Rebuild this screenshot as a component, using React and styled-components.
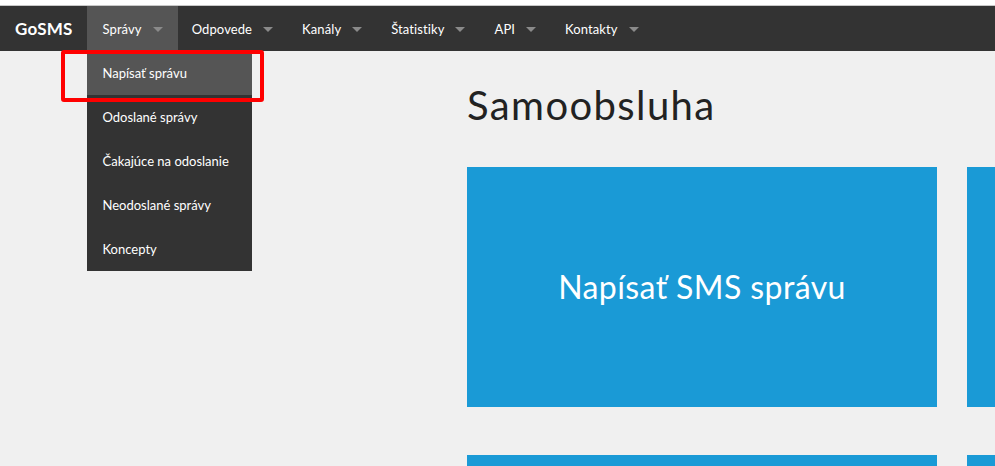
import styled, { createGlobalStyle } from "styled-components";

const GlobalStyle = createGlobalStyle`
  html, body {
    margin: 0;
    padding: 0;
    background: #f0f0f0;
    font-family: Lato, "Noto Sans", sans-serif;
    overflow: hidden;
  }
`;

const TopStrip = styled.div`
  height: 5px;
  background: #fff;
  border-bottom: 1px solid #c8c8c8;
`;

const NavBar = styled.nav`
  display: flex;
  align-items: stretch;
  height: 45px;
  background: #333;
  color: #fff;
  position: relative;
`;

const Brand = styled.div`
  display: flex;
  align-items: center;
  padding: 0 15px;
  font-size: 17px;
  font-weight: 700;
  letter-spacing: 0.2px;
`;

const NavItem = styled.div`
  position: relative;
  display: flex;
  align-items: center;
  gap: 11px;
  padding: 0 15px 0 ${(p) => p.$left || 14}px;
  font-size: 13px;
  letter-spacing: 0.1px;
  background: ${(p) => (p.$active ? "#555" : "transparent")};
`;

const Caret = styled.span`
  width: 0;
  height: 0;
  border-left: 5px solid transparent;
  border-right: 5px solid transparent;
  border-top: 5px solid #8a8a8a;
  margin-top: 1px;
`;

const Dropdown = styled.ul`
  position: absolute;
  top: 45px;
  left: 0;
  width: 165px;
  margin: 0;
  padding: 0;
  list-style: none;
  background: #333;
  letter-spacing: 0;
  z-index: 5;
`;

const DropItem = styled.li`
  height: 44px;
  display: flex;
  align-items: center;
  padding-left: 15px;
  font-size: 13px;
  color: #fff;
  background: ${(p) => (p.$active ? "#555" : "transparent")};
`;

const Highlight = styled.div`
  position: absolute;
  top: -1px;
  left: -26px;
  width: 195px;
  height: 44px;
  border: 4px solid #ff0000;
  border-radius: 3px;
  pointer-events: none;
`;

const Main = styled.main`
  padding: 31px 0 0 467px;
`;

const Title = styled.h1`
  margin: 0 0 39px;
  font-size: 40px;
  font-weight: 400;
  color: #222;
  line-height: 46px;
  letter-spacing: 1.4px;
`;

const Grid = styled.div`
  display: grid;
  grid-template-columns: 470px 470px;
  column-gap: 30px;
  row-gap: 48px;
`;

const Tile = styled.div`
  height: 240px;
  background: #1a9ad6;
  color: #fff;
  display: flex;
  align-items: center;
  justify-content: center;
  font-size: 32px;
  letter-spacing: 0.4px;
  padding-bottom: 2px;
  box-sizing: border-box;
`;

const menu = ["Odpovede", "Kanály", "Štatistiky", "API", "Kontakty"];
const sub = [
  "Napísať správu",
  "Odoslané správy",
  "Čakajúce na odoslanie",
  "Neodoslané správy",
  "Koncepty",
];

export default function App() {
  return (
    <>
      <GlobalStyle />
      <TopStrip />
      <NavBar>
        <Brand>GoSMS</Brand>
        <NavItem $active $left={15}>
          Správy
          <Caret />
          <Dropdown>
            {sub.map((s, i) => (
              <DropItem key={s} $active={i === 0}>
                {s}
              </DropItem>
            ))}
            <Highlight />
          </Dropdown>
        </NavItem>
        {menu.map((m) => (
          <NavItem key={m}>
            {m}
            <Caret />
          </NavItem>
        ))}
      </NavBar>
      <Main>
        <Title>Samoobsluha</Title>
        <Grid>
          <Tile>Napísať SMS správu</Tile>
          <Tile />
          <Tile />
          <Tile />
        </Grid>
      </Main>
    </>
  );
}
